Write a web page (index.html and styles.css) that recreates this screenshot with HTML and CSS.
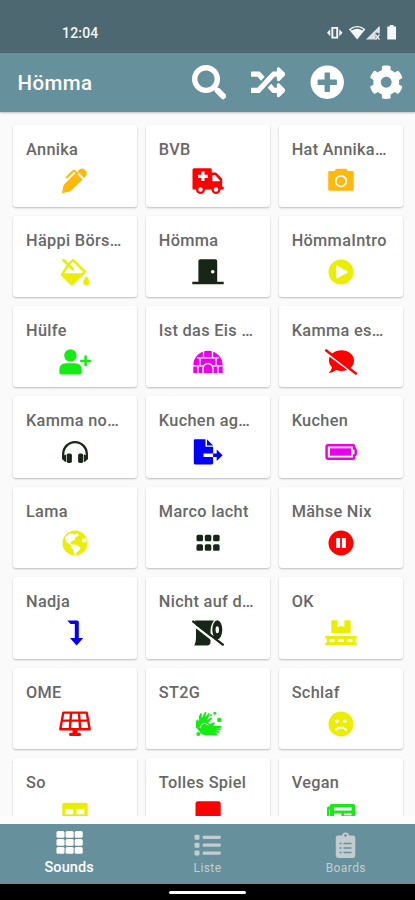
FILE: index.html
```html
<!DOCTYPE html>
<html lang="de">
<head>
<meta charset="utf-8">
<meta name="viewport" content="width=device-width, initial-scale=1">
<title>Hömma</title>
<link rel="stylesheet" href="styles.css">
</head>
<body>
<div class="app">
  <div class="status">
    <span class="clock">12:04</span>
    <svg class="status-icons" viewBox="0 0 72 18">
      <path d="M5.500 4h5v10h-5z" fill="none" stroke="currentColor" stroke-width="2"/>
      <path d="M3.300 5.500v7L0 9zM12.700 5.500v7L16 9z"/>
      <path d="M22.500 5.500Q31 -1.500 39.500 5.500L31 16z"/>
      <path d="M25 6.200Q31 2 37 6.200" fill="none" stroke="#4d6870" stroke-width="1.300"/>
      <path d="M54 2v7h-4v7H40z" opacity=".85"/>
      <path d="M53.500 3v7" fill="none" stroke="currentColor"/>
      <path d="M50 11l4 5M54 11l-4 5" fill="none" stroke="currentColor" stroke-width="1.300"/>
      <path d="M62 2.500h2.500V1h4v1.500H71V16h-9V2.500z"/>
    </svg>
  </div>
  <header class="bar">
    <h1>Hömma</h1>
    <div class="actions">
      <svg viewBox="0 0 512 512"><path d="M505 442.700L405.300 343c-4.500-4.500-10.600-7-17-7H372c27.600-35.300 44-79.700 44-128C416 93.100 322.900 0 208 0S0 93.100 0 208s93.100 208 208 208c48.300 0 92.700-16.400 128-44v16.300c0 6.400 2.500 12.500 7 17l99.700 99.700c9.400 9.400 24.600 9.400 33.900 0l28.300-28.300c9.400-9.400 9.400-24.600.1-34zM208 336c-70.700 0-128-57.200-128-128 0-70.700 57.200-128 128-128 70.700 0 128 57.200 128 128 0 70.700-57.200 128-128 128z"/></svg>
      <svg viewBox="0 0 512 512"><path d="M504.971 359.029c9.373 9.373 9.373 24.569 0 33.941l-80 79.984c-15.010 15.010-40.971 4.490-40.971-16.971V416h-58.785a12 12 0 0 1-8.773-3.812l-70.556-75.596 53.333-57.143L352 336h32v-39.981c0-21.438 25.943-31.998 40.971-16.971zM12 176h84l52.781 56.551 53.333-57.143-70.556-75.596A12 12 0 0 0 122.785 96H12c-6.627 0-12 5.373-12 12v56c0 6.627 5.373 12 12 12zm372 0v39.984c0 21.460 25.961 31.980 40.971 16.971l80-79.984c9.373-9.373 9.373-24.569 0-33.941l-80-79.981C409.943 24.021 384 34.582 384 56.019V96h-58.785a12 12 0 0 0-8.773 3.812L96 336H12c-6.627 0-12 5.373-12 12v56c0 6.627 5.373 12 12 12h110.785c3.326 0 6.503-1.381 8.773-3.812L352 176z"/></svg>
      <svg viewBox="0 0 512 512"><path d="M256 8C119 8 8 119 8 256s111 248 248 248 248-111 248-248S393 8 256 8zm144 276c0 6.600-5.400 12-12 12h-92v92c0 6.600-5.400 12-12 12h-56c-6.600 0-12-5.400-12-12v-92h-92c-6.600 0-12-5.400-12-12v-56c0-6.600 5.400-12 12-12h92v-92c0-6.600 5.400-12 12-12h56c6.600 0 12 5.400 12 12v92h92c6.600 0 12 5.400 12 12v56z"/></svg>
      <svg viewBox="0 0 512 512"><path d="M487.400 315.700l-42.600-24.600c4.300-23.200 4.300-47 0-70.200l42.600-24.600c4.900-2.800 7.100-8.600 5.500-14-11.100-35.600-30-67.800-54.700-94.600-3.800-4.100-10-5.100-14.800-2.300L380.800 110c-17.900-15.400-38.500-27.300-60.800-35.100V25.800c0-5.600-3.900-10.500-9.400-11.700-36.700-8.200-74.300-7.800-109.200 0-5.500 1.200-9.400 6.100-9.400 11.700V75c-22.200 7.900-42.800 19.800-60.800 35.100L88.700 85.500c-4.900-2.800-11-1.900-14.800 2.300-24.700 26.700-43.600 58.900-54.700 94.600-1.700 5.400.6 11.200 5.500 14L67.300 221c-4.300 23.200-4.300 47 0 70.200l-42.600 24.600c-4.900 2.800-7.100 8.600-5.500 14 11.100 35.600 30 67.800 54.700 94.600 3.800 4.100 10 5.100 14.800 2.300l42.600-24.600c17.900 15.400 38.500 27.300 60.800 35.100v49.200c0 5.600 3.900 10.500 9.400 11.700 36.700 8.200 74.300 7.800 109.200 0 5.500-1.200 9.400-6.100 9.400-11.700v-49.200c22.200-7.900 42.800-19.800 60.800-35.100l42.600 24.600c4.900 2.800 11 1.900 14.800-2.300 24.700-26.700 43.600-58.900 54.700-94.600 1.500-5.500-.7-11.300-5.600-14.100zM256 336c-44.100 0-80-35.900-80-80s35.900-80 80-80 80 35.900 80 80-35.900 80-80 80z"/></svg>
    </div>
  </header>
  <main class="sounds">
    <div class="card"><h2>Annika</h2>
      <svg class="orange" viewBox="0 0 32 26"><path d="M3 25.200l1.200-6.700q.3-1.600 1.500-2.800L17 4.800l6.700 6.700L12.500 22.200q-1.200 1.200-2.800 1.500zM18.400 3.500l1.800-1.700q3-2.700 6 .2t.3 6.200L25 10.100z"/><path d="M7.300 10L14 3.200q1-1 2 0l3 3" fill="none" stroke="currentColor" stroke-width="2"/></svg></div>
    <div class="card"><h2>BVB</h2>
      <svg class="red" viewBox="0 0 32 26"><path d="M2 .3h16.500q1.300 0 1.300 1.500v2.800H23q1.300 0 2.100.9l4.300 4.300q.8.800.8 2v7h1.500v2.600H.5V1.800Q.5.300 2 .3z"/><circle cx="8.500" cy="21.500" r="4.500"/><circle cx="24" cy="21.500" r="4.500"/><g fill="#fff"><circle cx="8.500" cy="21.500" r="2.200"/><circle cx="24" cy="21.500" r="2.200"/><path d="M9.300 3.500h3.200v3.200h3.200v3.200h-3.200v3.200H9.300V9.900H6.100V6.700h3.200zM20.400 7h2.700l4.700 5.200v1h-7.400z"/></g></svg></div>
    <div class="card"><h2>Hat Annika…</h2>
      <svg class="orange" viewBox="0 0 32 26"><path d="M4.500 3h5.200l.8-1.500q.4-.8 1.300-.8h8.800q.9 0 1.300.8l.8 1.500h4.700q1.300 0 1.300 1.300v17.300q0 1.200-1.300 1.200h-22.900q-1.300 0-1.300-1.200V4.300Q3.200 3 4.500 3z"/><circle cx="16" cy="13.200" r="5.300" fill="none" stroke="#fff" stroke-width="1.700"/></svg></div>

    <div class="card"><h2>Häppi Börs…</h2>
      <svg class="yellow" viewBox="0 0 32 26"><path d="M9.500 5.300L14 1.200l12 11.600-12.500 11.700q-.7.500-1.400 0l-8.600-8.300q-.8-.8 0-1.600z" fill="none" stroke="currentColor" stroke-width="2.400"/><path d="M3 14.300h22L13 25.500zM27.400 17q3.200 4.500 3.200 6.200a3.200 3.100 0 0 1-6.400 0q0-1.700 3.200-6.200z"/><path d="M4.500 1l9.500 9.300" fill="none" stroke="currentColor" stroke-width="2.700" stroke-linecap="round"/></svg></div>
    <div class="card"><h2>Hömma</h2>
      <svg class="dark" viewBox="0 0 32 26"><path d="M8.300.2h15q1.900 0 1.900 1.900v20.700h6.500v2.500H.3v-2.500h6.100V2.100Q6.400.2 8.300.2z"/><circle cx="20.700" cy="12.700" r="1.800" fill="#fff"/></svg></div>
    <div class="card"><h2>HömmaIntro</h2>
      <svg class="yellow" viewBox="0 0 32 26"><circle cx="16" cy="13" r="12.500"/><path d="M11.200 7.500q0-1.200 1.200-.8l10 5.600q.9.700 0 1.400l-10 5.600q-1.200.5-1.200-.8z" fill="#fff"/></svg></div>

    <div class="card"><h2>Hülfe</h2>
      <svg class="green" viewBox="0 0 32 26"><circle cx="11.400" cy="6.500" r="6.200"/><path d="M7 14.300h9q6.700 0 6.700 6.800v2.500q0 1.900-2 1.900H2.300q-2 0-2-1.900v-2.500q0-6.800 6.700-6.800z"/><path d="M26.600 6.500v10.800M21.200 11.900H32" fill="none" stroke="currentColor" stroke-width="2.500"/></svg></div>
    <div class="card"><h2>Ist das Eis …</h2>
      <svg class="magenta" viewBox="0 0 32 26"><path d="M1.300 24V16.200a14.700 14.500 0 0 1 29.400 0V24z"/><g fill="none" stroke="#fff" stroke-width="1.300"><path d="M5 8.800h22M1 16.800h10M21 16.800h10M11.500 1v7.800M20.500 1v7.800M8 8.800v8M24 8.800v8M11 24.500v-5a5 5 0 0 1 10 0v5M6 17v7.500M26 17v7.500"/></g></svg></div>
    <div class="card"><h2>Kamma es…</h2>
      <svg class="red" viewBox="0 0 32 26"><path d="M16.500 1.300c7 0 12.500 4.500 12.500 10.400S23.500 22 16.500 22q-3 0-5.300-1-3 2.600-7.500 3.200 2.800-3 3.200-5.700-3-2.900-3-6.800c0-5.900 5.600-10.400 12.600-10.400z"/><path d="M.5 3.300l30 22.500" fill="none" stroke="#fff" stroke-width="2.200"/><path d="M1.300 1.400l29.600 23" fill="none" stroke="currentColor" stroke-width="2.500" stroke-linecap="round"/></svg></div>

    <div class="card"><h2>Kamma no…</h2>
      <svg class="dark" viewBox="0 0 32 26"><path d="M4.200 20.500V15a11.800 11.800 0 0 1 23.600 0v5.500" fill="none" stroke="currentColor" stroke-width="2.300"/><rect x="7.700" y="14.400" width="5.200" height="9.700" rx="1.800"/><rect x="19.100" y="14.400" width="5.200" height="9.700" rx="1.800"/><path d="M7 15.500q-3.200 1-3.200 3.700T7 23zM25 15.500q3.200 1 3.200 3.700T25 23z"/></svg></div>
    <div class="card"><h2>Kuchen ag…</h2>
      <svg class="blue" viewBox="0 0 32 26"><path d="M3 .3h10.500v7.500h7.600v6.600h-9.600v3.700h9.600v6q0 1.300-1.200 1.300H3q-1.200 0-1.200-1.300v-22.500Q1.800.3 3 .3zM15 .3l6.100 6.100H15z"/><path d="M21.100 14.600h3.600v-4.200l5.900 5.900-5.900 5.800v-4.200h-3.600z"/></svg></div>
    <div class="card"><h2>Kuchen</h2>
      <svg class="magenta" viewBox="0 0 32 26"><path d="M2.900 6.300h25.200q1.100 0 1.100 1.100v2.200q1.500.2 1.500 1.900v3q0 1.700-1.500 1.900v2.200q0 1.100-1.100 1.100H2.900q-1.300 0-1.300-1.100V7.400q0-1.100 1.300-1.100z" fill="none" stroke="currentColor" stroke-width="2.500"/><path d="M5 9.300h21v7.400H5z"/></svg></div>

    <div class="card"><h2>Lama</h2>
      <svg class="yellow" viewBox="0 0 32 26"><circle cx="16" cy="13" r="12.500"/><path d="M6 7.700q3.500-4.200 7-4.600l2.500 1.300L18.600 3l1.200 2.800-3.300 1.400-.6 2.500-3.200 1.600-1.600 1.700 1.800 1.600 4.400.2 4.300 2.500-.8 2.600-2.500 1.900-1.800 2.600h-1.400l-.7-4.400-2.200-2.200.2-2.400-4.800-3.200zM22.800 10l2.200-2.300 2.300 1.300v3.200h-3.800z" fill="#fff"/></svg></div>
    <div class="card"><h2>Marco lacht</h2>
      <svg class="dark" viewBox="0 0 32 26"><g><rect x="4.500" y="4.700" width="6.500" height="6.500" rx="1.500"/><rect x="12.800" y="4.700" width="6.500" height="6.500" rx="1.500"/><rect x="21.100" y="4.700" width="6.500" height="6.500" rx="1.500"/><rect x="4.500" y="14.200" width="6.500" height="6.500" rx="1.500"/><rect x="12.800" y="14.200" width="6.500" height="6.500" rx="1.500"/><rect x="21.100" y="14.200" width="6.500" height="6.500" rx="1.500"/></g></svg></div>
    <div class="card"><h2>Mähse Nix</h2>
      <svg class="red" viewBox="0 0 32 26"><circle cx="16" cy="13" r="12.500"/><path d="M11.200 8h3.900v10h-3.900zM16.900 8h3.900v10h-3.900z" fill="#fff"/></svg></div>

    <div class="card"><h2>Nadja</h2>
      <svg class="blue" viewBox="0 0 32 26"><path d="M8.300.4h10q1.500 0 1.500 1.500v16.200h4.400L17.600 25.400 11 18.100h4.800V4h-4.200z"/></svg></div>
    <div class="card"><h2>Nicht auf d…</h2>
      <svg class="dark" viewBox="0 0 32 26"><path d="M3 .5h19q-3.500 4.500-3.500 11v10.200q0 3.800-3.500 3.800H2.300q1.700-3.200 1.700-7.500V9z"/><ellipse cx="25.300" cy="9.800" rx="5" ry="9.500"/><ellipse cx="25.300" cy="9.800" rx="1.700" ry="3.500" fill="#fff"/><path d="M0 3.700l30 23.300" fill="none" stroke="#fff" stroke-width="2.400"/><path d="M1.300 1.600l29.500 23" fill="none" stroke="currentColor" stroke-width="2.400" stroke-linecap="round"/></svg></div>
    <div class="card"><h2>OK</h2>
      <svg class="yellow" viewBox="0 0 32 26"><path d="M7.300.3h5.300v7.300l3.400-2 3.400 2V.3h5.300q1 0 1 1v10.800q0 1-1 1H7.300q-1 0-1-1V1.300q0-1 1-1z"/><path d="M.3 16h31.400v2.700H30v3.700h1.700v2.800H.3v-2.800H2v-3.700H.3z"/><path d="M4.600 18.900h4.900v3.200H4.600zM12.900 18.900h6.200v3.200h-6.200zM22.500 18.900h4.900v3.200h-4.900z" fill="#fff"/></svg></div>

    <div class="card"><h2>OME</h2>
      <svg class="red" viewBox="0 0 32 26"><path d="M4.300 1.600h23.400l3 16.600H1.300zM2.800 9.600h26.400M12.100 1.600l-1.300 16.600M19.900 1.600l1.300 16.600" fill="none" stroke="currentColor" stroke-width="2.400" stroke-linejoin="round"/><path d="M13.500 19h5v2.800h2q1.500 0 1.500 1.600T20.500 25h-9q-1.500 0-1.500-1.600t1.500-1.600h2z"/></svg></div>
    <div class="card"><h2>ST2G</h2>
      <svg class="green" viewBox="0 0 32 26"><path d="M4 16.500V10l1.600-1.800 1.300 2V5.500L8.500 2l1.400.7-.1 4.300L13 .8l1.500.7-1.500 5L16.600 2l1.300.8-2.500 6.300 3.800-2.900 1 1.300-4.200 4.600 2.200.8q2.200-1.600 4-1.600l.8 1.500-2.200 2h8l.4 1.900-5.700.5h5.200v2h-5l3.700.7v1.800h-4.500l2.500.9-.3 1.600H13q-4.200-.5-5.500-3.700z"/><path d="M8 17q1.500-5 5.500-4.500l3 1.800" fill="none" stroke="#fff"/><circle cx="6.300" cy="23" r="2"/><circle cx="27.200" cy="9" r="2.200"/><circle cx="22.800" cy="2.200" r="1.500"/><circle cx="19" cy="4.300" r="1"/></svg></div>
    <div class="card"><h2>Schlaf</h2>
      <svg class="yellow" viewBox="0 0 32 26"><circle cx="16" cy="13" r="12.500"/><circle cx="12" cy="10.300" r="1.700" fill="#fff"/><circle cx="20" cy="10.300" r="1.700" fill="#fff"/><path d="M10.800 18.800q5.200-4.600 10.400 0" fill="none" stroke="#fff" stroke-width="2" stroke-linecap="round"/></svg></div>

    <div class="card"><h2>So</h2>
      <svg class="yellow" viewBox="0 0 32 26"><path d="M5.500 1.800h21q2.200 0 2.200 2.200v18q0 2.200-2.200 2.200h-21q-2.200 0-2.200-2.200V4q0-2.200 2.200-2.200z"/><path d="M6.500 8h7.800v5.200H6.500zM17.500 8h7.800v5.200h-7.800zM6.500 16.500h7.800v5H6.500zM17.500 16.500h7.800v5h-7.800z" fill="#fff"/></svg></div>
    <div class="card"><h2>Tolles Spiel</h2>
      <svg class="red" viewBox="0 0 32 26"><rect x="3.500" y=".2" width="25.200" height="25.300" rx="2.300"/></svg></div>
    <div class="card"><h2>Vegan</h2>
      <svg class="green" viewBox="0 0 32 26"><path d="M6 3h22.500q1.500 0 1.500 1.500v18q0 1.500-1.500 1.500H5q-3 0-3-3V7q0-1.500 1.500-1.500H5V4z"/><path d="M9 6.300h17.500v3.200H9zM9 12.500h7.300v5H9zM19 12.500h7.500v1.800H19zM4 8.500h.8v11H4z" fill="#fff"/></svg></div>
  </main>
  <nav class="tabs">
    <a class="tab active">
      <svg viewBox="0 0 27 27"><rect x=".5" y="2" width="8" height="6.700" rx="1.500"/><rect x="9.600" y="2" width="8" height="6.700" rx="1.500"/><rect x="18.700" y="2" width="8" height="6.700" rx="1.500"/><rect x=".5" y="10" width="8" height="6.700" rx="1.500"/><rect x="9.600" y="10" width="8" height="6.700" rx="1.500"/><rect x="18.700" y="10" width="8" height="6.700" rx="1.500"/><rect x=".5" y="18" width="8" height="6.700" rx="1.500"/><rect x="9.600" y="18" width="8" height="6.700" rx="1.500"/><rect x="18.700" y="18" width="8" height="6.700" rx="1.500"/></svg>
      <span>Sounds</span>
    </a>
    <a class="tab">
      <svg class="lower" viewBox="0 0 27 27"><rect x=".5" y="2.800" width="5" height="5" rx="1"/><rect x=".5" y="10.700" width="5" height="5" rx="1"/><rect x=".5" y="18.600" width="5" height="5" rx="1"/><rect x="8.700" y="3.700" width="18" height="3.200" rx=".9"/><rect x="8.700" y="11.600" width="18" height="3.200" rx=".9"/><rect x="8.700" y="19.500" width="18" height="3.200" rx=".9"/></svg>
      <span>Liste</span>
    </a>
    <a class="tab">
      <svg class="lower" viewBox="0 0 27 27"><path d="M6.200 3.500h3.900a3.500 3.500 0 0 1 6.900 0h3.900q2.400 0 2.400 2.400v17.600q0 2.400-2.400 2.400H6.200q-2.400 0-2.400-2.400V5.900q0-2.400 2.400-2.400z"/><g fill="none" stroke="#66909c" stroke-width="1.300"><circle cx="13.500" cy="3.500" r=".7"/><path d="M7.500 11.500h2M11.500 11.500h8M7.500 16h2M11.500 16h8M7.500 20.500h2M11.500 20.500h8"/></g></svg>
      <span>Boards</span>
    </a>
  </nav>
  <div class="gesture"><div class="pill"></div></div>
</div>
</body>
</html>
```
FILE: styles.css
```css
* { box-sizing: border-box; }
body { margin: 0; font-family: Roboto, "Liberation Sans", sans-serif; background: #fafafa; }
h1, h2 { margin: 0; }
svg { display: block; fill: currentColor; }

.app { display: flex; flex-direction: column; width: 415px; height: 900px; overflow: hidden; }

.status { flex: none; height: 53px; padding: 13px 18px 0 62px; display: flex; align-items: center; justify-content: space-between; background: #4d6870; color: #f4f7f8; }
.clock { font-size: 14px; font-weight: 500; letter-spacing: .2px; }
.status-icons { width: 70px; height: 17.500px; margin-top: -1px; }

.bar { flex: none; height: 59px; padding: 0 12px 0 17.500px; display: flex; align-items: center; justify-content: space-between; background: #66909c; color: #fff; box-shadow: 0 1px 2px rgba(0, 0, 0, .25); }
.bar h1 { font-size: 20.500px; font-weight: 500; letter-spacing: .4px; padding-top: 1px; }
.actions { display: flex; gap: 24.500px; }
.actions svg { width: 34.500px; height: 34.500px; }

.sounds { flex: none; height: 704px; padding: 13.200px 12px 0 13px; display: grid; grid-template-columns: repeat(3, 1fr); grid-auto-rows: 81.400px; gap: 9px 8.500px; align-content: start; overflow: hidden; }
.card { padding: 15px 0 0 13px; background: #fff; border-radius: 3px; box-shadow: 0 1px 2px rgba(0, 0, 0, .25); }
.card h2 { font-size: 16.300px; line-height: 20px; font-weight: 500; letter-spacing: .33px; color: #686868; white-space: nowrap; }
.card svg { width: 32px; height: 26px; margin: 8px 0 0 33px; }

.orange { color: #ffb90c; }
.red { color: #f00; }
.yellow { color: #eaee00; }
.dark { color: #182618; }
.green { color: #14ec14; }
.magenta { color: #ea00ea; }
.blue { color: #0000fc; }

.tabs { flex: none; height: 68px; border-top: 8px solid #fdfdfd; display: grid; grid-template-columns: repeat(3, 1fr); background: #66909c; }
.tab { display: flex; flex-direction: column; align-items: center; padding-top: 5px; color: #c5cccf; font-size: 12px; letter-spacing: .4px; }
.tab svg { width: 27px; height: 27px; }
.tab .lower { margin: 3px 0 -3px; }
.tab span { line-height: 18px; margin-top: 3px; }
.active { color: #fff; font-size: 14.500px; font-weight: 500; letter-spacing: .1px; }

.gesture { flex: 1; display: flex; justify-content: center; padding-top: 7px; background: #000; }
.pill { width: 77px; height: 3px; border-radius: 2px; background: #fff; }
```
